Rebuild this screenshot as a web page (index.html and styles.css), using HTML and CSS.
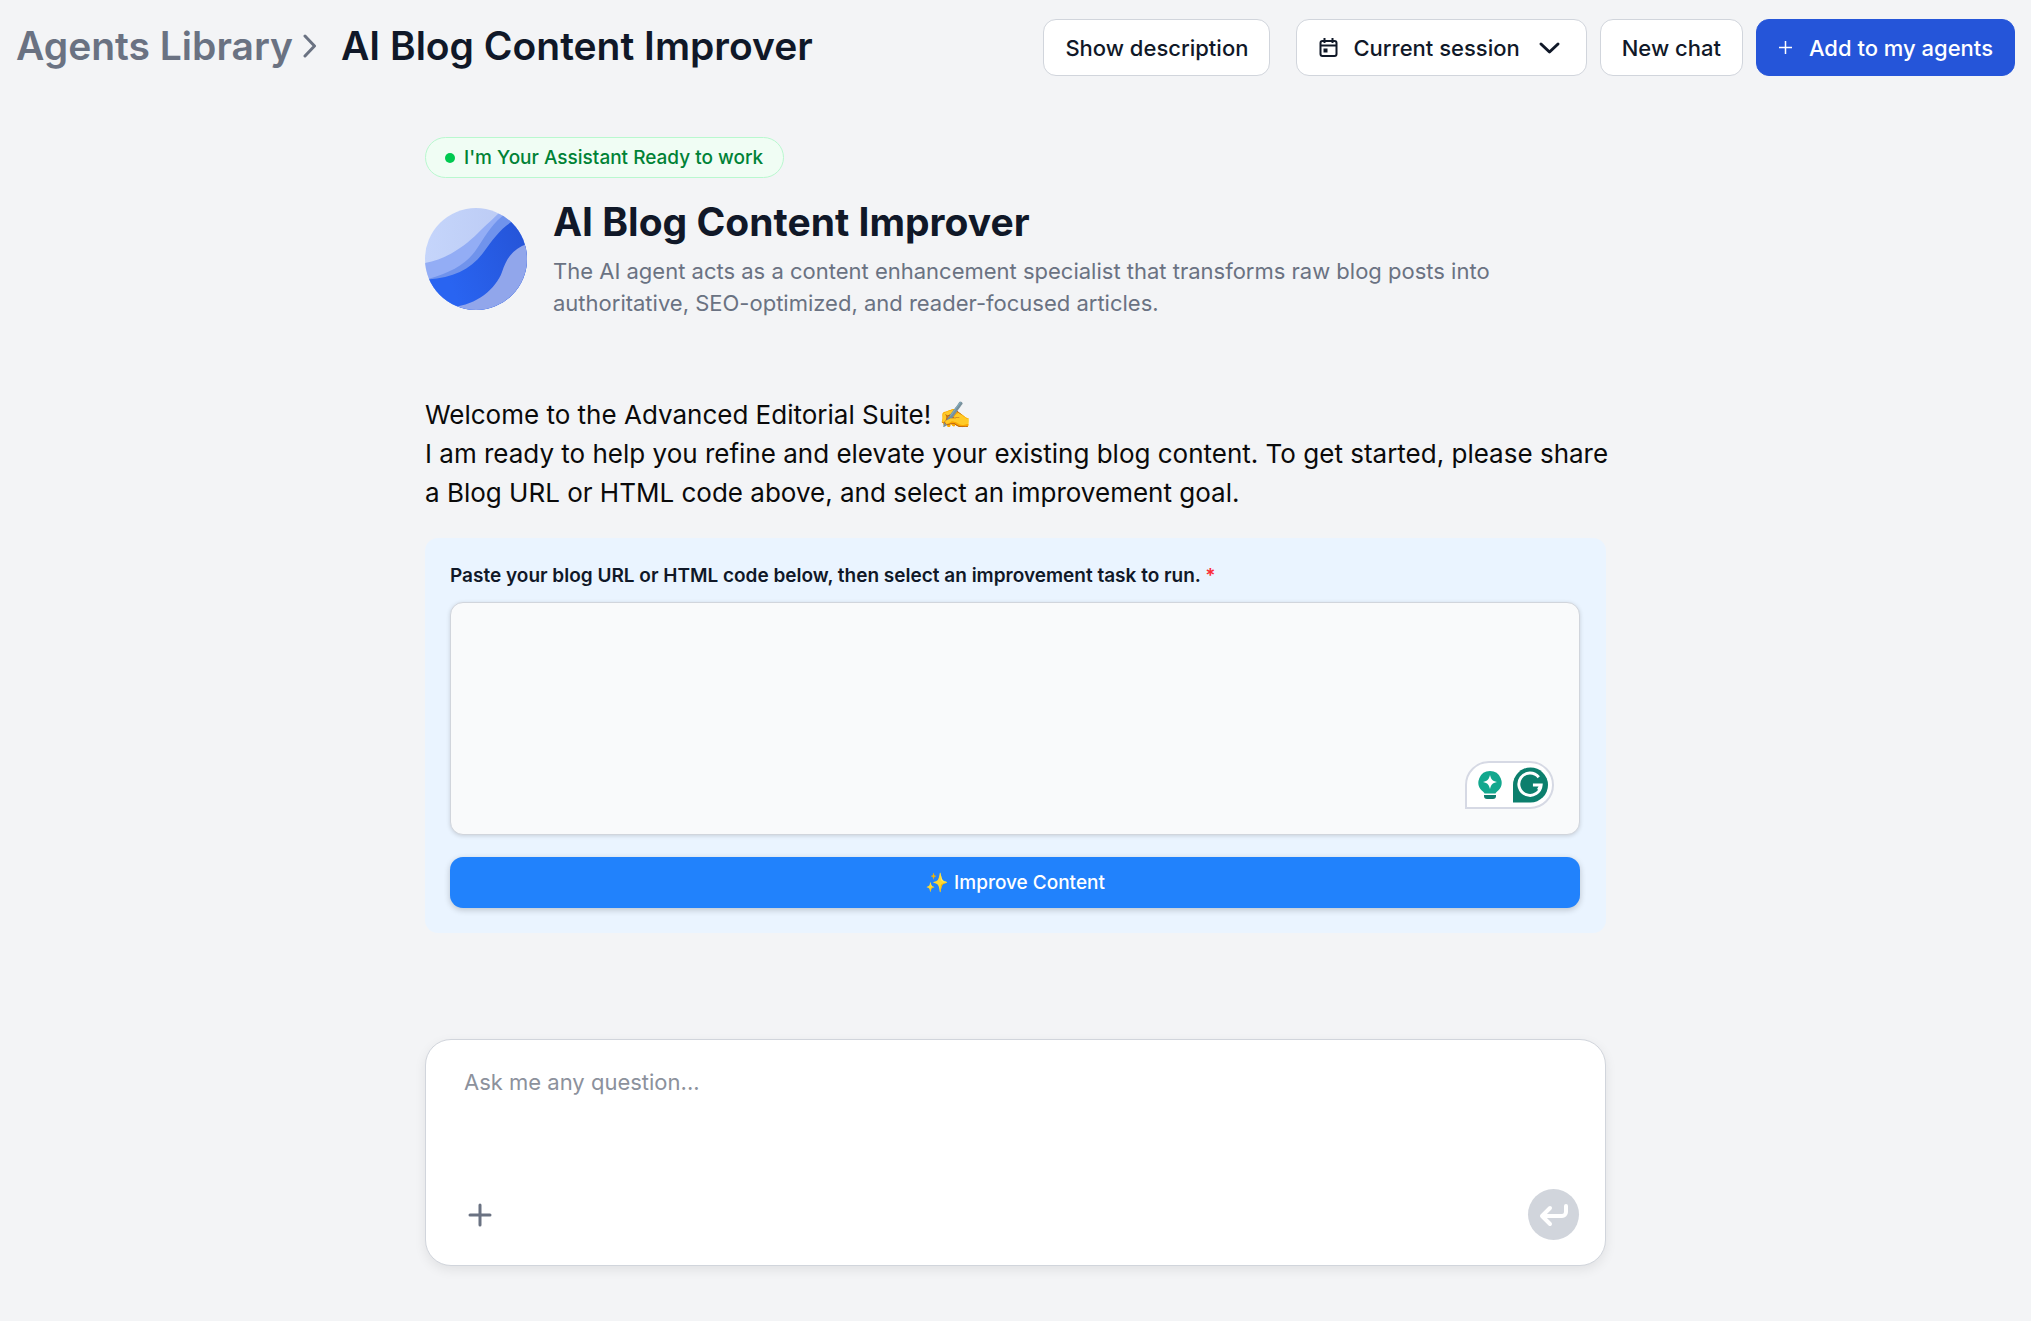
FILE: index.html
```html
<!DOCTYPE html>
<html lang="en">
<head>
<meta charset="utf-8">
<meta name="viewport" content="width=device-width, initial-scale=1">
<title>AI Blog Content Improver</title>
<link rel="stylesheet" href="styles.css">
</head>
<body>
<header class="topbar">
  <nav class="crumbs" aria-label="Breadcrumb">
    <a class="crumb-link" href="#">Agents Library</a>
    <svg class="crumb-sep" viewBox="0 0 14 26" aria-hidden="true"><path d="M2 3l9.500 10L2 23"/></svg>
    <span class="crumb-current">AI Blog Content Improver</span>
  </nav>
  <div class="actions">
    <button class="btn btn-description" type="button">Show description</button>
    <button class="btn" type="button">
      <svg class="icon-calendar" viewBox="0 0 22 22" aria-hidden="true"><rect x="2.500" y="4" width="16" height="15" rx="2"/><path d="M2.500 8.500h16M6.500 1v5M14.500 1v5"/><rect class="day" x="5.500" y="11.500" width="4" height="4"/></svg>
      <span>Current session</span>
      <svg class="icon-chevron" viewBox="0 0 32 22" aria-hidden="true"><path d="M8 7l8.500 8L25 7"/></svg>
    </button>
    <button class="btn" type="button">New chat</button>
    <button class="btn btn-primary" type="button">
      <svg class="icon-plus-small" viewBox="0 0 15 15" aria-hidden="true"><path d="M1 7.500h13M7.500 1v13"/></svg>
      <span>Add to my agents</span>
    </button>
  </div>
</header>

<main class="content">
  <div class="status"><span class="status-dot"></span>I'm Your Assistant Ready to work</div>

  <section class="agent">
    <svg class="avatar" viewBox="0 0 102 102" aria-hidden="true">
      <defs>
        <clipPath id="disc"><circle cx="51" cy="51" r="51"/></clipPath>
        <linearGradient id="wave" x1="0" y1="0.700" x2="1" y2="0.300"><stop offset="0.200" stop-color="#2964f1"/><stop offset="1" stop-color="#2553d6"/></linearGradient>
        <linearGradient id="sky" x1="0" y1="0" x2="1" y2="0"><stop offset="0" stop-color="#c5d5fb"/><stop offset="1" stop-color="#bac9f3"/></linearGradient>
      </defs>
      <g clip-path="url(#disc)">
        <rect width="102" height="102" fill="url(#sky)"/>
        <path d="M0 55C22 51 40 38 53 25C62 16 69 10 75 4L102 0V102H0Z" fill="#93adf5"/>
        <path d="M3 71C28 64 43 55 53 39C62 25 69 14 80 6L102 0V102H0Z" fill="#7093ec"/>
        <path d="M3 71.500C28 70 46 61 58 45C68 31 76 20 88 13L110 0V110H0Z" fill="url(#wave)"/>
        <path d="M28 99C51 97 71 81 77 64C82 48 90 40 102 36V102H28Z" fill="#91a6eb"/>
      </g>
    </svg>
    <div class="agent-text">
      <h1 class="agent-name">AI Blog Content Improver</h1>
      <p class="agent-summary">The AI agent acts as a content enhancement specialist that transforms raw blog posts into authoritative, SEO-optimized, and reader-focused articles.</p>
    </div>
  </section>

  <p class="welcome">Welcome to the Advanced Editorial Suite! ✍️<br>I am ready to help you refine and elevate your existing blog content. To get started, please share a Blog URL or HTML code above, and select an improvement goal.</p>

  <form class="panel">
    <label class="panel-label" for="source">Paste your blog URL or HTML code below, then select an improvement task to run. <span class="required">*</span></label>
    <div class="source-wrap">
      <textarea class="source" id="source"></textarea>
      <div class="assist">
        <svg class="assist-bulb" viewBox="0 0 24 30" aria-hidden="true"><path d="M12 1a11.500 11.500 0 0 1 8 19.800C18.500 22 18 22.500 17.500 23.500h-11C6 22.500 5.500 22 4 20.800A11.500 11.500 0 0 1 12 1Z" fill="#12a88e"/><path d="M6 25h12v1a3 3 0 0 1-3 3H9a3 3 0 0 1-3-3Z" fill="#0e7e6f"/><path d="M12 5c1.500 5 2 5.500 7 7c-5 1.500-5.500 2-7 7c-1.500-5-2-5.500-7-7c5-1.500 5.500-2 7-7Z" fill="#fff"/></svg>
        <svg class="assist-mark" viewBox="0 0 36 36" aria-hidden="true"><path d="M0 36V18A18 18 0 0 1 18 0a18 18 0 0 1 0 36Z" fill="#0c7f6d"/><path d="M26.500 10A11.500 11.500 0 1 0 29 18H20.500M29 18l-3 5" fill="none" stroke="#fff" stroke-width="3"/></svg>
      </div>
    </div>
    <button class="improve" type="button">✨ Improve Content</button>
  </form>

  <form class="composer">
    <textarea class="question" aria-label="Question" placeholder="Ask me any question..."></textarea>
    <div class="composer-bar">
      <button class="attach" type="button" aria-label="Add attachment"><svg class="icon-plus" viewBox="0 0 24 24" aria-hidden="true"><path d="M2 12h20M12 2v20"/></svg></button>
      <button class="send" type="button" aria-label="Send"><svg class="icon-enter" viewBox="0 0 30 24" aria-hidden="true"><path d="M27 3v6a4 4 0 0 1-4 4H3M11 5l-8 8 8 8"/></svg></button>
    </div>
  </form>
</main>
</body>
</html>
```
FILE: styles.css
```css
* {
  box-sizing: border-box;
}

body {
  margin: 0;
  background: #f3f4f6;
  color: #101828;
  font-family: Inter, "Liberation Sans", sans-serif;
}

button,
textarea {
  font-family: inherit;
}

svg {
  display: block;
  flex: none;
}

.topbar {
  display: flex;
  align-items: flex-start;
  justify-content: space-between;
  padding: 19px 16px 0;
}

.crumbs {
  display: flex;
  align-items: center;
  font-size: 39px;
  font-weight: 600;
  line-height: 54px;
  white-space: nowrap;
}

.crumb-link {
  color: #6a7282;
  text-decoration: none;
}

.crumb-sep {
  width: 14px;
  height: 26px;
  margin: 0 24px 0 10px;
  fill: none;
  stroke: #6a7282;
  stroke-width: 3;
  stroke-linecap: round;
  stroke-linejoin: round;
}

.actions {
  display: flex;
  gap: 13px;
}

.btn {
  display: flex;
  align-items: center;
  gap: 13px;
  height: 57px;
  padding: 0 21px;
  border: 1px solid #d1d5dc;
  border-radius: 13px;
  background: #fff;
  color: #101828;
  font-size: 22px;
  font-weight: 500;
  white-space: nowrap;
}

.btn-description {
  margin-right: 13px;
}

.btn-primary {
  gap: 16px;
  border-color: #2555d9;
  background: #2555d9;
  color: #fff;
}

.icon-calendar {
  width: 22px;
  height: 22px;
  fill: none;
  stroke: #101828;
  stroke-width: 2;
}

.icon-calendar .day {
  fill: #101828;
  stroke: none;
}

.icon-chevron {
  width: 32px;
  height: 22px;
  fill: none;
  stroke: #101828;
  stroke-width: 3;
  stroke-linecap: round;
  stroke-linejoin: round;
}

.icon-plus-small {
  width: 15px;
  height: 15px;
  stroke: #fff;
  stroke-width: 1.5;
}

.content {
  display: flex;
  flex-direction: column;
  max-width: 1181px;
  margin: 0 auto;
  padding: 61px 0 54px;
}

.status {
  display: flex;
  align-items: center;
  align-self: flex-start;
  gap: 9px;
  height: 41px;
  padding: 0 20px 0 19px;
  border: 1px solid #b9f8cf;
  border-radius: 21px;
  background: #f0fdf4;
  color: #008236;
  font-size: 19px;
  font-weight: 500;
}

.status-dot {
  width: 10px;
  height: 10px;
  border-radius: 50%;
  background: #00c950;
}

.agent {
  display: flex;
  align-items: center;
  gap: 26px;
  margin-top: 20px;
}

.avatar {
  width: 102px;
  height: 102px;
}

.agent-name {
  margin: 0 0 9px;
  font-size: 39px;
  font-weight: 700;
  line-height: 48px;
}

.agent-summary {
  margin: 0;
  color: #6a7282;
  font-size: 22px;
  line-height: 32px;
}

.welcome {
  margin: 76px -16px 26px 0;
  color: #0a0a0a;
  font-size: 26px;
  line-height: 39px;
}

.panel {
  display: flex;
  flex-direction: column;
  padding: 25px 26px 25px 25px;
  border-radius: 13px;
  background: #eaf4ff;
}

.panel-label {
  font-size: 19px;
  font-weight: 600;
  line-height: 26px;
}

.required {
  color: #fb2c36;
}

.source-wrap {
  position: relative;
  margin: 13px 0 22px;
}

.source {
  display: block;
  width: 100%;
  height: 233px;
  padding: 16px;
  border: 1px solid #d1d5dc;
  border-radius: 13px;
  background: #f9fafb;
  box-shadow: 0 1px 4px rgba(0, 0, 0, 0.15);
  font-size: 19px;
  resize: none;
}

.assist {
  position: absolute;
  right: 26px;
  bottom: 26px;
  display: flex;
  align-items: center;
  gap: 11px;
  height: 48px;
  padding: 0 4px 0 11px;
  border: 2px solid #d6d9e4;
  border-radius: 24px 24px 24px 0;
  background: #fff;
}

.assist-bulb {
  width: 24px;
  height: 30px;
}

.assist-mark {
  width: 35px;
  height: 36px;
}

.improve {
  height: 51px;
  border: 0;
  border-radius: 13px;
  background: #2182fc;
  box-shadow: 0 2px 6px rgba(0, 0, 0, 0.2);
  color: #fff;
  font-size: 19px;
  font-weight: 500;
}

.composer {
  display: flex;
  flex-direction: column;
  margin-top: 106px;
  padding: 25px 26px 25px 25px;
  border: 1px solid #d1d5dc;
  border-radius: 26px;
  background: #fff;
  box-shadow: 0 4px 12px rgba(0, 0, 0, 0.08);
}

.question {
  height: 124px;
  padding: 0 13px;
  border: 0;
  background: transparent;
  font-size: 22px;
  line-height: 34px;
  resize: none;
}

.question::placeholder {
  color: #8c919c;
}

.composer-bar {
  display: flex;
  align-items: center;
  justify-content: space-between;
}

.attach {
  padding: 0 17px;
  border: 0;
  background: transparent;
}

.icon-plus {
  width: 24px;
  height: 24px;
  stroke: #6a7282;
  stroke-width: 3;
  stroke-linecap: round;
}

.send {
  display: grid;
  place-items: center;
  width: 51px;
  height: 51px;
  padding: 0;
  border: 0;
  border-radius: 50%;
  background: #d1d5dc;
}

.icon-enter {
  width: 30px;
  height: 24px;
  fill: none;
  stroke: #fff;
  stroke-width: 4;
  stroke-linecap: round;
  stroke-linejoin: round;
}
```
